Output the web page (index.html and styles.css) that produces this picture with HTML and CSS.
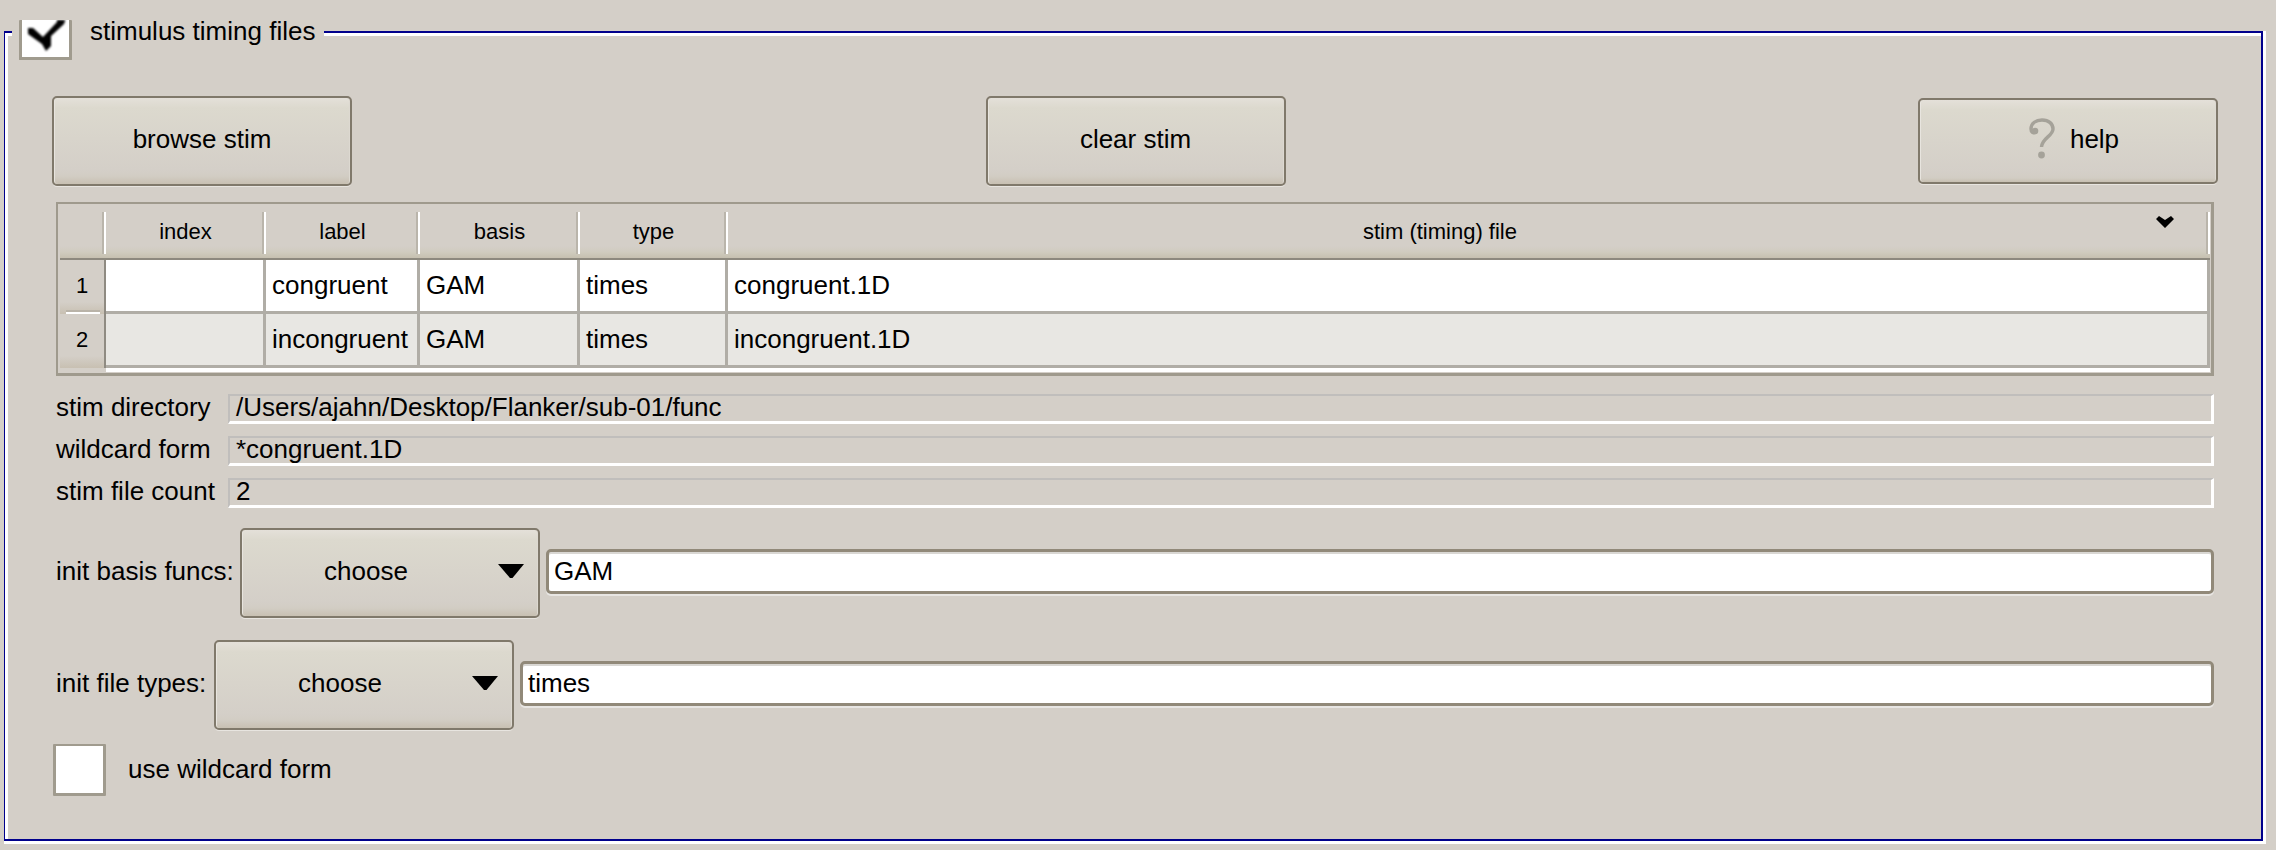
FILE: index.html
```html
<!DOCTYPE html>
<html lang="en">
<head>
<meta charset="utf-8">
<title>stimulus timing files</title>
<link rel="stylesheet" href="styles.css">
</head>
<body>
<section class="group">
  <div class="group-inner">
    <div class="legend">
      <span class="check check-title"><svg class="tick" width="47" height="37" viewBox="0 0 47 37"><path d="M6 8 H11 L21 17 L35 2 V-2 H44 L42 4 L29 16 L29 26 L24 31 L20 24 L6 14 Z" fill="#000"/></svg></span>
      <span class="legend-text">stimulus timing files</span>
    </div>
    <div class="buttons">
      <button class="btn">browse stim</button>
      <button class="btn btn-clear">clear stim</button>
      <button class="btn btn-help"><svg class="q" width="26" height="42" viewBox="0 0 26 42"><path d="M7 14 C4 16 2 14 2 11 C2 5 7 2 13 2 C20 2 24 6 24 11 C24 18 13 20 12.500 29" fill="none" stroke="#a5a299" stroke-width="3.400"/><circle cx="6" cy="13" r="3.300" fill="#a5a299"/><circle cx="12.500" cy="37" r="3.400" fill="#a5a299"/></svg>help</button>
    </div>
    <div class="table">
      <div class="thead">
        <div class="th"></div><div class="th">index</div><div class="th">label</div><div class="th">basis</div><div class="th">type</div>
        <div class="th th-file">stim (timing) file<svg class="sort" width="18" height="12" viewBox="0 0 18 12"><path d="M0 3 L3 0 L9 4 L15 0 L18 3 L9 12 Z"/></svg></div>
      </div>
      <div class="tr"><div class="rh">1</div><div class="td"></div><div class="td">congruent</div><div class="td">GAM</div><div class="td">times</div><div class="td">congruent.1D</div></div>
      <div class="tr alt"><div class="rh">2</div><div class="td"></div><div class="td">incongruent</div><div class="td">GAM</div><div class="td">times</div><div class="td">incongruent.1D</div></div>
      <div class="tfoot"></div>
    </div>
    <div class="info">
      <span class="label">stim directory</span><span class="field">/Users/ajahn/Desktop/Flanker/sub-01/func</span>
      <span class="label">wildcard form</span><span class="field">*congruent.1D</span>
      <span class="label">stim file count</span><span class="field">2</span>
    </div>
    <div class="choice basis">
      <span class="choice-label">init basis funcs:</span>
      <button class="btn combo"><span class="combo-text">choose</span><svg width="26" height="14" viewBox="0 0 26 14"><path d="M0 0H26L14.5 14H12Z"/></svg></button>
      <span class="input">GAM</span>
    </div>
    <div class="choice types">
      <span class="choice-label">init file types:</span>
      <button class="btn combo"><span class="combo-text">choose</span><svg width="26" height="14" viewBox="0 0 26 14"><path d="M0 0H26L14.5 14H12Z"/></svg></button>
      <span class="input">times</span>
    </div>
    <div class="wild"><span class="check"></span><span>use wildcard form</span></div>
  </div>
</section>
</body>
</html>
```
FILE: styles.css
```css
* { box-sizing: border-box; }
body {
  margin: 0;
  height: 850px;
  padding: 31px 10px 6px 4px;
  background: #d4cfc8;
  color: #000;
  font: 26px/30px "Liberation Sans", Arial, sans-serif;
  overflow: hidden;
}
svg { display: block; }
.group {
  height: 813px;
  border: solid #fff;
  border-width: 0 3px 3px 0;
}
.group-inner {
  position: relative;
  height: 810px;
  border: solid #00008c;
  border-width: 2px 2px 2px 1px;
  box-shadow: inset 3px 3px 0 #fff;
  padding: 63px 43px 0 47px;
}
.legend {
  position: absolute;
  left: 7px;
  top: -13px;
  width: 312px;
  height: 44px;
  padding-left: 7px;
  display: flex;
  gap: 18px;
  background: #d4cfc8;
}
.legend-text { margin-top: -4px; }
.check {
  width: 53px;
  height: 52px;
  background: #fff;
  border: 3px solid #a09b8e;
  border-top-width: 2px;
  border-radius: 1px;
}
.check-title { height: 40px; border-top: 0; overflow: hidden; }
.tick { filter: blur(1px); }

.buttons {
  display: flex;
  justify-content: space-between;
  align-items: center;
  height: 90px;
}
.btn {
  width: 300px;
  height: 90px;
  padding: 0;
  border: 2px solid #80796b;
  border-radius: 5px;
  background: linear-gradient(#e4e0d9 0, #dcd9ce 10px, #d4cfc8 72px, #d2cdc4 78px, #c8c0b2 100%);
  box-shadow: 0 2px 0 -1px #e8e5e0, inset 1px 0 0 #e8e5df, inset -1px 0 0 #ddd9d1;
  font: inherit;
  color: inherit;
  display: flex;
  align-items: center;
  justify-content: center;
  padding-bottom: 4px;
}
.btn-clear { margin-left: 2px; padding-right: 1px; }
.btn-help { height: 86px; gap: 15px; padding-left: 12px; }

.table {
  margin: 16px 4px 0;
  border: solid #9f9a8d;
  border-width: 2px 3px 3px 2px;
  padding: 0 1px 1px 2px;
  height: 174px;
}
.thead, .tr {
  display: grid;
  grid-template-columns: 46px 160px 154px 160px 148px 1fr;
}
.thead {
  height: 56px;
  font-size: 22px;
  background: linear-gradient(#d4cfc8 42px, #d0ccbf 48px, #c6c0b0 54px);
  border-bottom: 2px solid #8d897e;
}
.th {
  position: relative;
  margin: 8px 0 4px;
  padding-left: 1px;
  border-right: 2px solid #fff;
  box-shadow: inset -2px 0 0 #bab5ab;
  line-height: 39px;
  text-align: center;
}
.th-file { padding: 0 56px 0 0; }
.sort { position: absolute; right: 34px; top: 4px; }
.tr { height: 54px; background: #fff; }
.rh {
  position: relative;
  font-size: 22px;
  line-height: 52px;
  text-align: center;
  border-right: 2px solid #8f8b82;
  background: linear-gradient(#d4cfc8 42px, #c8c0b2 54px);
}
.tr:not(.alt) .rh::after {
  content: "";
  position: absolute;
  left: 6px;
  right: 4px;
  bottom: 0;
  height: 4px;
  background: linear-gradient(#b9b3a8 50%, #fff 50%);
}
.td {
  padding-left: 6px;
  line-height: 50px;
  border: solid #b0ada6;
  border-width: 0 3px 3px 0;
  white-space: nowrap;
}
.alt .td { background: #e8e7e3; }
.tfoot { height: 4px; margin-left: 46px; background: #fff; }

.info {
  margin: 18px 4px 0;
  display: grid;
  grid-template-columns: 172px 1fr;
  grid-auto-rows: 30px;
  row-gap: 12px;
}
.label { line-height: 27px; }
.field {
  padding-left: 6px;
  line-height: 23px;
  border: solid;
  border-width: 2px 3px 3px 2px;
  border-color: #c0bebc #fff #fff #c0bebc;
}
.choice {
  margin: 20px 4px 0;
  display: flex;
  align-items: center;
  height: 90px;
}
.choice + .choice { margin-top: 22px; }
.choice-label { width: 184px; padding-bottom: 4px; }
.types .choice-label { width: 158px; }
.combo {
  justify-content: space-between;
  padding: 0 14px 4px 0;
}
.combo-text { width: 248px; }
.input {
  flex: 1;
  margin: 0 0 3px 6px;
  height: 45px;
  padding-left: 5px;
  line-height: 38px;
  background: #fff;
  border: 3px solid #918979;
  border-radius: 5px;
  box-shadow: 0 2px 0 #e8e6e3, inset 0 2px 0 #d9d7d3;
}
.wild {
  margin: 14px 1px 0;
  display: flex;
  gap: 22px;
  line-height: 51px;
}
```
